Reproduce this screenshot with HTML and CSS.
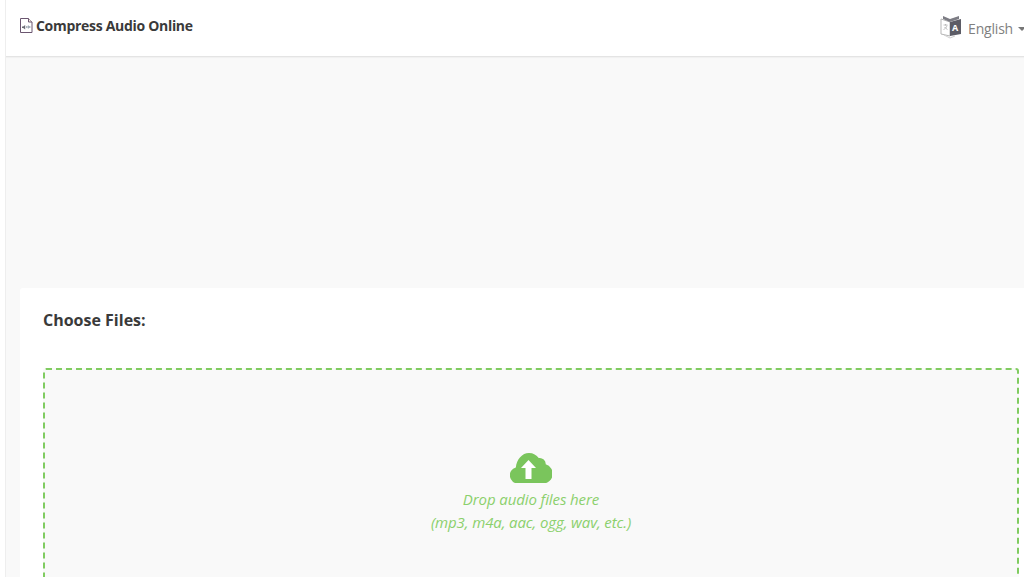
FILE: index.html
```html
<!DOCTYPE html>
<html lang="en">
<head>
  <meta charset="UTF-8">
  <title>Compress Audio Online</title>
  <link rel="stylesheet" href="styles.css">
</head>
<body>
  <div class="page">
    <header class="topbar">
      <a class="brand" href="#">
        <svg class="brand-icon" viewBox="0 0 14 15">
          <path d="M1.500 .5h8l3.500 3.500v10.500h-11.500z" fill="#fff" stroke="#6b5670"/>
          <path d="M9.500 .5v3.500h3.500" fill="#f3eee0" stroke="#6b5670"/>
          <path d="M3 8.500h1.200l2-1.500v4.500l-2-1.500h-1.200z" fill="#6a6a74"/>
          <path d="M7.800 8v2M9.300 7.500v3M10.800 8v2" stroke="#6a7a8a" fill="none" stroke-width=".8"/>
        </svg>
        <span>Compress Audio Online</span>
      </a>
      <div class="lang">
        <svg class="lang-icon" viewBox="0 0 22 24">
          <path d="M1 4l9 3v14l-9-2z" fill="#fff" stroke="#b5b5b5"/>
          <path d="M10 7l11-3v15l-11 2z" fill="#5c5c66"/>
          <path d="M3 1l7 3 9-3v3l-9 3-7-3z" fill="#7c7c84"/>
          <path d="M4 20l6 3 5-2" fill="none" stroke="#cfcfcf"/>
          <path d="M3.500 10h4M5.500 9v1.500M7 10.500c-.5 2-2 3.500-3.500 4M4.500 12c.8 1 2 2 3 2.500" fill="none" stroke="#b0b0b0" stroke-width=".8"/>
          <text class="lang-letter" x="12" y="15.500">A</text>
        </svg>
        <span>English</span>
        <i class="caret"></i>
      </div>
    </header>
    <main class="content">
      <section class="card">
        <h2>Choose Files:</h2>
        <div class="dropzone">
          <svg class="cloud" viewBox="0 0 42 30">
            <path d="M8 30.500a8.200 8.200 0 0 1-2.200-16.100c.9-8 6.300-14.400 13.200-14.400 4.200 0 7.600 2 9.700 5a6 6 0 0 1 7 6.300 9.800 9.800 0 0 1-2.700 19.200z" fill="#7ac55c"/>
            <path d="M18.500 7l7.500 8h-4.500v11h-6v-11h-4.500z" fill="#fff"/>
          </svg>
          <p>Drop audio files here</p>
          <p class="formats">(mp3, m4a, aac, ogg, wav, etc.)</p>
        </div>
      </section>
    </main>
  </div>
</body>
</html>
```

FILE: styles.css
```css
html, body {
  height: 100%;
}
body {
  margin: 0;
  font-family: "Open Sans", "Noto Sans", Arial, sans-serif;
  color: #333;
  background-color: #fff;
  overflow: hidden;
}
.page {
  height: 577px;
  margin-left: 5px;
  border-left: 1px solid #eee;
  background-color: #f9f9f9;
  overflow: hidden;
}
.topbar {
  display: flex;
  justify-content: space-between;
  height: 56px;
  background-color: #fff;
  border-bottom: 1px solid #e4e4e4;
  box-shadow: 0 1px 1px rgba(0, 0, 0, .03);
}
.brand {
  display: flex;
  align-items: center;
  gap: 3px;
  height: 51px;
  padding-left: 13px;
  font-size: 14px;
  font-weight: 700;
  letter-spacing: -.3px;
  color: #3a3a3a;
  text-decoration: none;
}
.brand-icon {
  width: 14px;
  height: 15px;
}
.lang {
  display: flex;
  align-items: center;
  height: 57px;
  margin-right: -2px;
  font-size: 14px;
  letter-spacing: -.2px;
  color: #808080;
}
.lang-icon {
  width: 22px;
  height: 24px;
  margin-right: 6px;
  margin-top: -4px;
}
.lang-letter {
  font-size: 9px;
  font-weight: 700;
  fill: #fff;
}
.caret {
  width: 0;
  height: 0;
  margin-left: 5px;
  border-top: 4px solid #777;
  border-left: 4px solid transparent;
  border-right: 4px solid transparent;
}
.content {
  padding: 231px 0 0 14px;
}
.card {
  padding: 21px 5px 0 23px;
  height: 300px;
  background-color: #fff;
  border-radius: 3px 0 0 0;
}
.card h2 {
  margin: 0;
  font-size: 16px;
  line-height: 22px;
  font-weight: 700;
  color: #3a3a3a;
}
.dropzone {
  display: flex;
  flex-direction: column;
  align-items: center;
  height: 300px;
  margin-top: 37px;
  padding-top: 83px;
  box-sizing: border-box;
  background-color: #f9f9f9;
  border: 2px dashed #80cc60;
  border-radius: 3px;
  color: #8bd06c;
  font-size: 15px;
  font-style: italic;
  letter-spacing: -.1px;
}
.cloud {
  width: 42px;
  height: 30px;
  margin-bottom: 5px;
}
.dropzone p {
  margin: 0;
  line-height: 22px;
}
.dropzone .formats {
  margin-top: 1px;
}
```
